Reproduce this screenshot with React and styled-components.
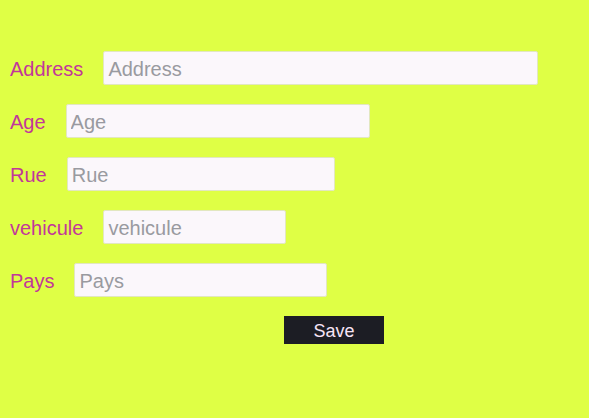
import React from 'react'
import styled, { createGlobalStyle } from 'styled-components'

const Global = createGlobalStyle`
    html, body {
        margin: 0;
        padding: 0;
        background: #dfff45;
        font-family: "Liberation Sans", Arial, sans-serif;
    }
`;

const Page = styled.div`
    width: 589px;
    height: 418px;
    background: #dfff45;
    padding: 51px 0 0 10px;
    box-sizing: border-box;
    display: flex;
    flex-direction: column;
    gap: 19px;
`;

const Row = styled.div`
    display: flex;
    align-items: center;
    gap: 20px;
    height: 34px;
`;

const Label = styled.label`
    color: #c2379a;
    font-size: 20px;
    padding-top: 3px;
`;

const Input = styled.input`
    width: ${p => p.$w}px;
    height: 34px;
    box-sizing: border-box;
    background: #fbf7fb;
    border: 1px solid #e2e7c0;
    border-radius: 2px;
    font-family: "Liberation Sans", Arial, sans-serif;
    font-size: 20px;
    padding: 2px 4px 0;
    outline: none;
    &::placeholder {
        color: #999aa0;
    }
`;

const Actions = styled.div`
    padding-left: 274px;
`;

const Button = styled.button`
    width: 100px;
    height: 28px;
    background: #1c1d24;
    color: #f6e4f6;
    border: none;
    font-family: "Liberation Sans", Arial, sans-serif;
    font-size: 18px;
    padding: 3px 0 0;
`;

const fields = [
    { name: 'Address', w: 435, gap: 21 },
    { name: 'Age', w: 304 },
    { name: 'Rue', w: 268 },
    { name: 'vehicule', w: 183 },
    { name: 'Pays', w: 253 },
]

function App() {
    return (
        <>
            <Global />
            <Page>
                {fields.map(f => (
                    <Row key={f.name}>
                        <Label>{f.name}</Label>
                        <Input $w={f.w} placeholder={f.name} />
                    </Row>
                ))}
                <Actions>
                    <Button>Save</Button>
                </Actions>
            </Page>
        </>
    )
}

export default App
